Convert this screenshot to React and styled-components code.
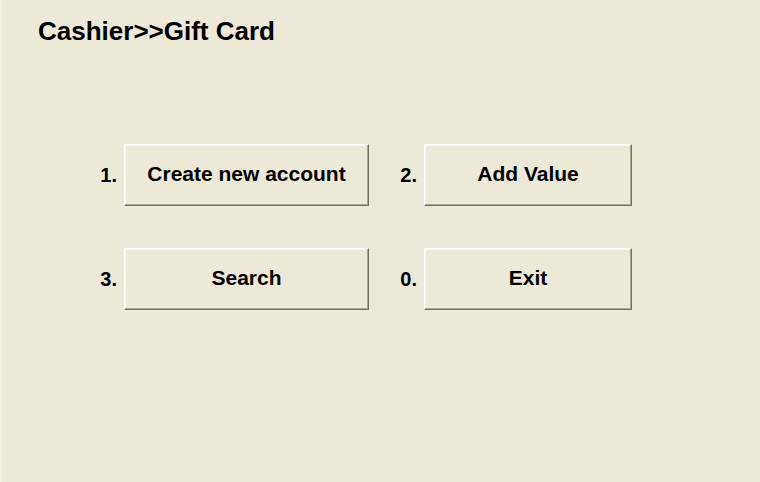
import React from "react";
import styled, { createGlobalStyle } from "styled-components";

const Global = createGlobalStyle`
  html, body { margin: 0; padding: 0; background: #ECE9D8; }
  body { font-family: "Liberation Sans", Arial, sans-serif; }
`;

const Page = styled.div`
  width: 760px;
  height: 482px;
  box-sizing: border-box;
  background: #ECE9D8;
  border-left: 2px solid #F2F0E4;
  padding: 15px 0 0 36px;
`;

const Title = styled.h1`
  margin: 0;
  font-size: 26px;
  line-height: 32px;
  font-weight: bold;
  color: #000;
`;

const Menu = styled.div`
  display: grid;
  grid-template-columns: 31px 245px 55px 208px;
  grid-auto-rows: 62px;
  row-gap: 42px;
  margin: 97px 0 0 55px;
  align-items: center;
`;

const Num = styled.span`
  font-size: 20px;
  font-weight: bold;
  color: #000;
  text-align: right;
  padding-right: 7px;
`;

const Btn = styled.button`
  height: 62px;
  box-sizing: border-box;
  background: #ECE9D8;
  border: none;
  border-top: 1px solid #FFFFFF;
  border-left: 1px solid #FFFFFF;
  border-right: 1px solid #716F64;
  border-bottom: 1px solid #716F64;
  box-shadow: inset -1px -1px 0 #ACA899, inset 1px 1px 0 #F8F7F1;
  font-family: "Liberation Sans", Arial, sans-serif;
  font-size: 21px;
  font-weight: bold;
  color: #000;
  padding: 0 0 2px 0;
  cursor: pointer;
`;

const items = [
  ["1.", "Create new account"],
  ["2.", "Add Value"],
  ["3.", "Search"],
  ["0.", "Exit"],
];

export default function App() {
  return (
    <>
      <Global />
      <Page>
        <Title>Cashier&gt;&gt;Gift Card</Title>
        <Menu>
          {items.map(([n, label]) => (
            <React.Fragment key={n}>
              <Num>{n}</Num>
              <Btn>{label}</Btn>
            </React.Fragment>
          ))}
        </Menu>
      </Page>
    </>
  );
}
